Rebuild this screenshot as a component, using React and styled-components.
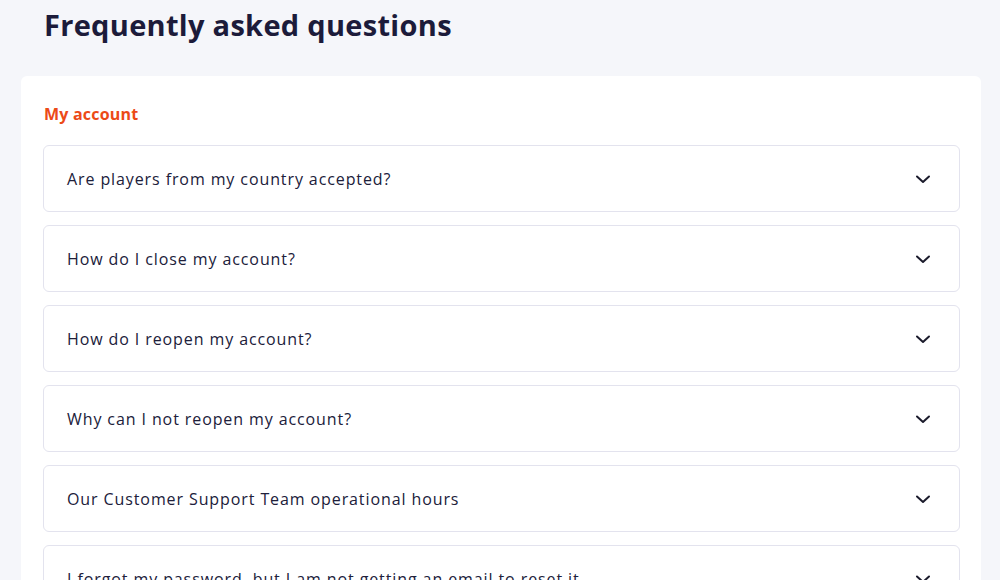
import React from "react";
import styled, { createGlobalStyle } from "styled-components";

const Global = createGlobalStyle`
  * { box-sizing: border-box; }
  html, body { margin: 0; padding: 0; background: #f5f6fa; }
  body { font-family: "Open Sans", "Noto Sans", sans-serif; }
`;

const Page = styled.div`
  width: 1000px;
  height: 580px;
  overflow: hidden;
  background: #f5f6fa;
  padding: 0 19px 0 21px;
`;

const Title = styled.h1`
  margin: 0;
  padding: 7px 0 0 23px;
  height: 76px;
  font-family: "Open Sans", sans-serif;
  font-weight: 700;
  font-size: 29px;
  line-height: 36px;
  color: #1c1b3a;
  letter-spacing: 0.3px;
`;

const Card = styled.section`
  background: #ffffff;
  border-radius: 6px;
  padding: 26px 21px 0 22px;
  height: 600px;
`;

const Section = styled.h2`
  margin: 0 0 19px 1px;
  font-family: "Open Sans", sans-serif;
  font-weight: 700;
  font-size: 16px;
  line-height: 24px;
  color: #ec4a17;
  letter-spacing: 0.2px;
`;

const List = styled.div`
  display: flex;
  flex-direction: column;
  gap: 13px;
`;

const Item = styled.div`
  height: 67px;
  border: 1px solid #e3e3ee;
  border-radius: 6px;
  display: flex;
  align-items: center;
  justify-content: space-between;
  padding: 0 28px 0 23px;
  background: #fff;
`;

const Question = styled.span`
  font-family: "Open Sans", sans-serif;
  font-size: 16px;
  line-height: 22px;
  color: #20203a;
  letter-spacing: 0.9px;
`;

const Chevron = () => (
  <svg width="16" height="16" viewBox="0 0 16 16" fill="none">
    <path d="M2 5.5 L8 11 L14 5.5" stroke="#1b1b2c" strokeWidth="2" strokeLinecap="round" strokeLinejoin="round" />
  </svg>
);

const questions = [
  "Are players from my country accepted?",
  "How do I close my account?",
  "How do I reopen my account?",
  "Why can I not reopen my account?",
  "Our Customer Support Team operational hours",
  "I forgot my password, but I am not getting an email to reset it",
];

export default function App() {
  return (
    <Page>
      <Global />
      <Title>Frequently asked questions</Title>
      <Card>
        <Section>My account</Section>
        <List>
          {questions.map((q) => (
            <Item key={q}>
              <Question>{q}</Question>
              <Chevron />
            </Item>
          ))}
        </List>
      </Card>
    </Page>
  );
}
